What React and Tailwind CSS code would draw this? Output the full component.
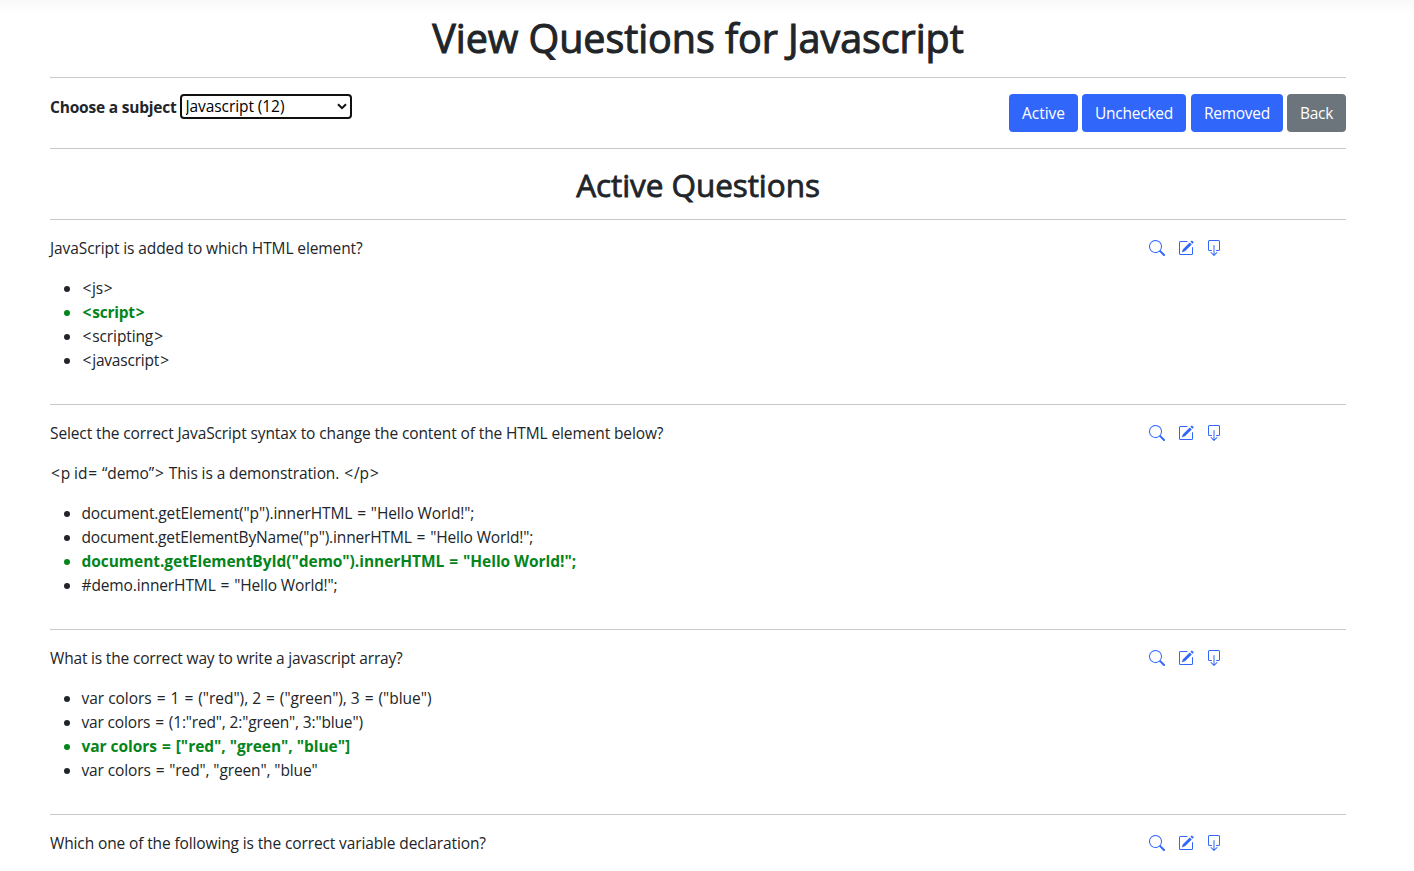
import { BsBoxArrowDown, BsPencilSquare, BsSearch } from "react-icons/bs";

const questions = [
  {
    prompt: [{ text: "JavaScript is added to which HTML element?", spacing: "tracking-[-0.1px]" }],
    answers: [
      { text: "<js>", spacing: "tracking-[-0.3px]" },
      { text: "<script>", spacing: "tracking-[-0.22px]", correct: true },
      { text: "<scripting>", spacing: "tracking-[-0.11px]" },
      { text: "<javascript>", spacing: "tracking-[-0.2px]" },
    ],
  },
  {
    prompt: [
      {
        text: "Select the correct JavaScript syntax to change the content of the HTML element below?",
        spacing: "tracking-[-0.115px]",
      },
      { text: "<p id= “demo”> This is a demonstration. </p>", spacing: "tracking-[-0.1px]" },
    ],
    answers: [
      { text: 'document.getElement("p").innerHTML = "Hello World!";', spacing: "tracking-[-0.12px]" },
      { text: 'document.getElementByName("p").innerHTML = "Hello World!";', spacing: "tracking-[-0.145px]" },
      { text: 'document.getElementById("demo").innerHTML = "Hello World!";', spacing: "tracking-[-0.05px]", correct: true },
      { text: '#demo.innerHTML = "Hello World!";', spacing: "tracking-[-0.12px]" },
    ],
  },
  {
    prompt: [{ text: "What is the correct way to write a javascript array?", spacing: "tracking-[-0.18px]" }],
    answers: [
      { text: 'var colors = 1 = ("red"), 2 = ("green"), 3 = ("blue")', spacing: "tracking-[-0.02px]" },
      { text: 'var colors = (1:"red", 2:"green", 3:"blue")', spacing: "tracking-[-0.16px]" },
      { text: 'var colors = ["red", "green", "blue"]', spacing: "tracking-[-0.04px]", correct: true },
      { text: 'var colors = "red", "green", "blue"', spacing: "tracking-[-0.12px]" },
    ],
  },
  {
    prompt: [
      { text: "Which one of the following is the correct variable declaration?", spacing: "tracking-[-0.125px]" },
    ],
    answers: [],
  },
];

const filters = [
  { label: "Active", style: "w-[69px] bg-[#3066fa]" },
  { label: "Unchecked", style: "ml-1 w-[104px] bg-[#3066fa] tracking-[-0.25px]" },
  { label: "Removed", style: "ml-[5px] w-[92px] bg-[#3066fa] tracking-[-0.27px]" },
  { label: "Back", style: "ml-1 w-[59px] bg-[#6b757b] tracking-[-0.3px]" },
];

function Rule() {
  return <hr className="my-4 h-px border-0 bg-[#c8c9ca]" />;
}

// Gives operators and angle brackets a little air on both sides.
function Code({ text }) {
  return text.split(/([<>=])/).map((part, index) =>
    /^[<>=]$/.test(part) ? (
      <span key={index} className="px-px">
        {part}
      </span>
    ) : (
      part
    ),
  );
}

function Question({ prompt, answers }) {
  return (
    <section className="flex">
      <div className="w-[1099.3px]">
        {prompt.map((line) => (
          <p key={line.text} className={`mb-4 whitespace-pre ${line.spacing}`}>
            <Code text={line.text} />
          </p>
        ))}
        {answers.length > 0 && (
          <ul className="mb-4 list-disc pl-[31.5px]">
            {answers.map((answer) => (
              <li
                key={answer.text}
                className={`whitespace-pre ${answer.spacing} ${answer.correct ? "font-bold text-[#04851c]" : ""}`}
              >
                <Code text={answer.text} />
              </li>
            ))}
          </ul>
        )}
      </div>
      <div className="flex h-6 items-center gap-[12.5px] text-[#3066fa]">
        <BsSearch size={16} />
        <BsPencilSquare size={16} />
        <BsBoxArrowDown size={16} />
      </div>
    </section>
  );
}

export default function App() {
  return (
    <div className="h-[871px] overflow-hidden bg-white font-['Open_Sans',sans-serif] text-[15.5px] leading-6 text-[#212529]">
      <div className="h-[13px] bg-linear-to-b from-[#f8f8f8] to-white" />
      <main className="ml-[50px] w-[1296px]">
        <h1 className="h-12 pt-px text-center text-[39.5px] leading-[48px] font-medium tracking-[-0.07px] [-webkit-text-stroke:1px_#212529]">
          View Questions for Javascript
        </h1>
        <Rule />
        <div className="flex items-start justify-between">
          <div className="flex">
            <label htmlFor="subject" className="w-[130px] pt-px font-bold tracking-[-0.2px]">
              Choose a subject
            </label>
            <div className="flex h-[25px] w-[172px] items-center justify-between rounded-[4px] border-2 border-[#101010] bg-white">
              <select
                id="subject"
                className="h-[21px] w-[140px] appearance-none bg-transparent pl-[3.5px] text-[15.5px] leading-[21px] tracking-[-0.08px] text-black outline-none"
              >
                <option>Javascript (12)</option>
              </select>
              <svg width="10" height="7" viewBox="0 0 10 7" fill="none" className="mr-[3px]">
                <path d="M1 1.2L5 5.2L9 1.2" stroke="#101010" strokeWidth="2" />
              </svg>
            </div>
          </div>
          <div className="flex">
            {filters.map((filter) => (
              <button
                key={filter.label}
                className={`h-[38px] rounded-[4px] text-center text-white ${filter.style}`}
              >
                {filter.label}
              </button>
            ))}
          </div>
        </div>
        <Rule />
        <h2 className="h-[38px] pt-px text-center text-[31.5px] leading-[38px] font-medium tracking-[-0.07px] [-webkit-text-stroke:0.8px_#212529]">
          Active Questions
        </h2>
        {questions.map((question) => (
          <div key={question.prompt[0].text}>
            <Rule />
            <Question {...question} />
          </div>
        ))}
      </main>
    </div>
  );
}
